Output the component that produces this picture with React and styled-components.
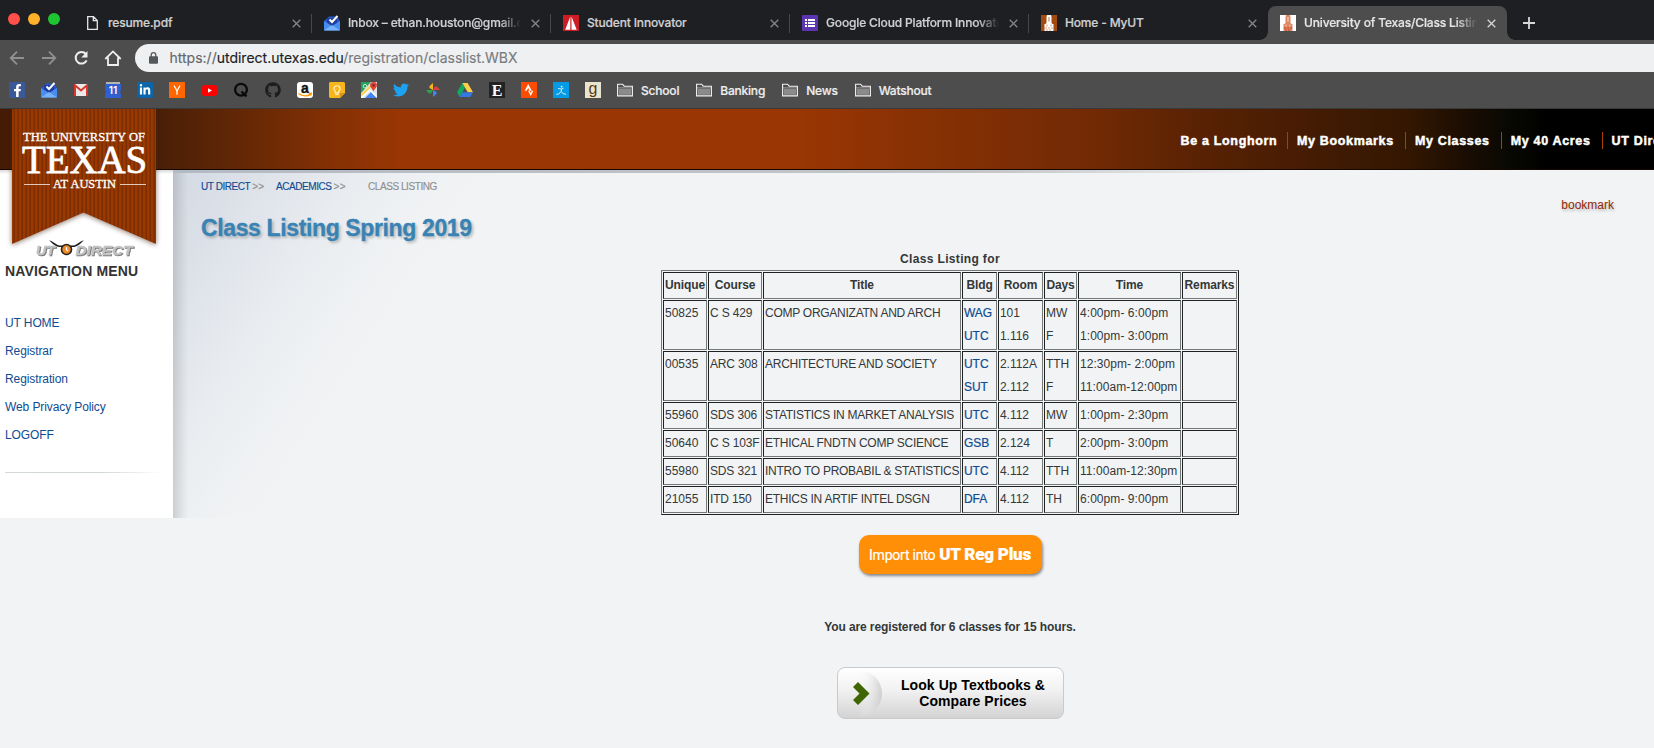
import React from 'react';
import styled, { createGlobalStyle } from 'styled-components';
import { FaFacebookF, FaLinkedinIn, FaGithub, FaTwitter, FaStrava } from 'react-icons/fa';

const UI = 'Inter, Roboto, sans-serif';
const PAGE = '"Liberation Sans", Arial, sans-serif';

const GlobalStyle = createGlobalStyle`
  * { box-sizing: border-box; }
  body { margin: 0; overflow: hidden; background: #f2f3f5; font-family: ${PAGE}; }
  a { text-decoration: none; }
  svg { display: block; flex: none; }
`;

const Screen = styled.div`
  width: 100vw;
  height: 100vh;
  overflow: hidden;
`;

/* Browser frame */

const TabStrip = styled.div`
  display: flex;
  height: 40px;
  padding-left: 8px;
  background: #1e1f23;
  font-family: ${UI};
`;

const WindowButtons = styled.div`
  display: flex;
  flex: none;
  gap: 8px;
  width: 65px;
  padding-top: 13px;
`;

const Light = styled.span`
  width: 12px;
  height: 12px;
  border-radius: 50%;
  background: ${(p) => p.$color};
`;

const TabBox = styled.div`
  position: relative;
  display: flex;
  flex: none;
  align-items: center;
  width: 239px;
  height: 34px;
  margin-top: 6px;
  padding: 0 11px 0 ${(p) => (p.$indent || 12)}px;
  border-radius: 8px 8px 0 0;
  background: ${(p) => (p.$active ? '#4d4d4d' : 'transparent')};
  &::after {
    content: '';
    position: absolute;
    right: 0;
    top: 8px;
    width: 1px;
    height: 19px;
    background: ${(p) => (p.$line ? '#47484c' : 'transparent')};
  }
`;

const Flare = styled.span`
  position: absolute;
  bottom: 0;
  ${(p) => p.$side}: -8px;
  width: 8px;
  height: 8px;
  background: radial-gradient(circle at ${(p) => (p.$side === 'left' ? '0 0' : '100% 0')}, transparent 7.5px, #4d4d4d 8px);
`;

const TabTitle = styled.span`
  flex: 1;
  min-width: 0;
  margin: 0 8px 0 ${(p) => p.$gap || 8}px;
  overflow: hidden;
  white-space: nowrap;
  font-size: 12px;
  font-weight: 500;
  line-height: 18px;
  letter-spacing: -0.16px;
  color: ${(p) => (p.$active ? '#e4e5e6' : '#cfd0d2')};
  -webkit-text-stroke: 0.2px;
  ${(p) => p.$fade && 'mask-image: linear-gradient(90deg, #000 87%, transparent 99%);'}
`;

const NewTab = styled.span`
  padding: 17px 0 0 16px;
`;

const Toolbar = styled.div`
  display: flex;
  align-items: center;
  height: 36px;
  background: #4d4d4d;
  padding-left: 8px;
  font-family: ${UI};
`;

const ToolButton = styled.span`
  width: 32px;
  flex: none;
`;

const AddressBar = styled.div`
  display: flex;
  align-items: center;
  flex: 1;
  height: 28px;
  margin: 0 -20px 0 -1px;
  padding-left: 14px;
  border-radius: 14px;
  background: #eff0f2;
  color: #797c80;
  font-size: 14px;
  white-space: nowrap;
`;

const Url = styled.span`
  margin-left: 11.5px;
  line-height: 18px;
  -webkit-text-stroke: 0.15px;
`;
const Scheme = styled.span`color: #64676b;`;
const Host = styled.span`color: #202124;`;

const BookmarkBar = styled.div`
  display: flex;
  align-items: center;
  height: 33px;
  padding: 0 0 4px 9px;
  background: #4d4d4d;
  border-bottom: 1px solid #383a3a;
  font-family: ${UI};
`;

const Favicon = styled.span`
  display: flex;
  flex: none;
  align-items: center;
  justify-content: center;
  width: 16px;
  height: 16px;
  margin-right: 16px;
  border-radius: ${(p) => p.$radius || 0}px;
  background: ${(p) => p.$bg || 'transparent'};
  color: ${(p) => p.$color || '#fff'};
`;

const Folder = styled.span`
  display: flex;
  align-items: center;
  gap: 8px;
  margin-right: 17px;
  font-size: 12px;
  font-weight: 500;
  letter-spacing: -0.2px;
  color: #eeeeee;
  -webkit-text-stroke: 0.2px;
`;

/* Site header */

const Masthead = styled.header`
  position: relative;
  height: 61px;
  background: linear-gradient(90deg, #451b06 0, #4a1f07 160px, #632705 240px, #843004 330px, #993603 400px,
    #993603 800px, #8c3204 890px, #722a05 1094px, #5a2203 1195px, #431b03 1320px, #331701 1410px, #1d0e02 1460px, #080802 1510px, #000 1546px);
  border-bottom: 1px solid #160800;
`;

const TopNav = styled.nav`
  display: flex;
  width: 1900px;
  padding: 23px 0 0 1170.5px;
`;

const TopLink = styled.a`
  height: 17px;
  padding: 0 ${(p) => (p.$first ? 9.5 : 11)}px 0 ${(p) => (p.$first ? 10 : 9)}px;
  border-left: ${(p) => (p.$first ? '0' : '1px solid #a63f0a')};
  color: #fff;
  font-size: 12.5px;
  font-weight: bold;
  line-height: 18px;
  letter-spacing: 0.67px;
  -webkit-text-stroke: 0.45px #fff;
  white-space: nowrap;
`;

const Ribbon = styled.div`
  position: absolute;
  z-index: 2;
  left: 0;
  top: 0;
`;

/* Page body */

const Body = styled.div`
  display: flex;
  width: 1699px;
`;

const Sidebar = styled.aside`
  flex: none;
  width: 173px;
  height: 348px;
  padding: 91px 0 0 5px;
  background: linear-gradient(#d9d9d9, #fff 4px);
`;

const MenuTitle = styled.h2`
  margin: 0 0 29px;
  font-size: 14px;
  line-height: 20px;
  letter-spacing: 0.16px;
  color: #333;
`;

const MenuLink = styled.a`
  display: block;
  height: 28px;
  font-size: 12px;
  line-height: 26px;
  letter-spacing: -0.1px;
  color: #0f4b91;
`;

const MenuRule = styled.div`
  width: 158px;
  height: 1px;
  margin-top: 22px;
  background: linear-gradient(90deg, #d3d9d9, #cfd5d5 60%, #fff);
`;

const Main = styled.main`
  position: relative;
  flex: 1;
  height: 578px;
  padding-left: 28px;
  background: linear-gradient(123deg, #d3dae3 0, #dbe0e8 60px, #e4e8ed 120px, #ebeef1 175px, #f0f2f4 235px, #f2f3f5 290px) 0 0 / 100% 348px no-repeat;
`;

const TopShade = styled.div`
  position: absolute;
  left: 0;
  top: 0;
  width: 1100px;
  height: 3px;
  background: linear-gradient(90deg, #b4bac3, #c4c6c8 75%, transparent);
`;

const SideShade = styled.div`
  position: absolute;
  left: 0;
  top: 3px;
  width: 15px;
  height: 345px;
  background: linear-gradient(90deg, rgba(90, 95, 90, 0.22), rgba(90, 95, 90, 0.1) 50%, transparent);
`;

const Trail = styled.div`
  display: flex;
  height: 24px;
  padding-top: 10px;
  font-size: 10px;
  line-height: 14px;
  letter-spacing: -0.43px;
  color: #8f8f8f;
  -webkit-text-stroke: 0.15px;
`;

const Crumb = styled.span`
  width: ${(p) => p.$w}px;
  white-space: nowrap;
  a { color: #0f4b91; margin-right: 2px; }
`;

const Arrows = styled.span`letter-spacing: 0.2px;`;

const BookmarkLink = styled.a`
  display: block;
  margin: 3px 85px 0 0;
  text-align: right;
  font-size: 12px;
  line-height: 16px;
  color: #8f2a06;
  text-shadow: 1px 2px 3px rgba(0, 0, 0, 0.25);
`;

const PageTitle = styled.h1`
  margin: 0;
  height: 36px;
  padding-top: 2px;
  font-size: 23px;
  line-height: 26px;
  letter-spacing: -0.37px;
  color: #3883b4;
  -webkit-text-stroke: 0.3px #3883b4;
  text-shadow: 2px 2px 3px rgba(0, 0, 0, 0.25);
`;

const Center = styled.div`
  display: flex;
  flex-direction: column;
  align-items: center;
`;

const Caption = styled.div`
  height: 21px;
  font-size: 12px;
  font-weight: bold;
  line-height: 21px;
  letter-spacing: 0.34px;
  color: #333838;
`;

const Table = styled.table`
  table-layout: fixed;
  width: 578px;
  border: 1px solid;
  border-color: #747876 #1f2222 #1f2222 #747876;
  border-collapse: separate;
  border-spacing: 1px;
  font-size: 12px;
  line-height: 23px;
  color: #333838;
`;

const cell = `
  border: 1px solid;
  border-color: #1f2222 #747876 #747876 #1f2222;
  padding: 1px;
  white-space: nowrap;
`;

const Th = styled.th`
  ${cell}
  letter-spacing: -0.12px;
`;

const Td = styled.td`
  ${cell}
  vertical-align: top;
  text-align: left;
  letter-spacing: ${(p) => p.$track || 0}px;
`;

const Line = styled.div`
  color: ${(p) => (p.$link ? '#0f4b91' : 'inherit')};
  -webkit-text-stroke: ${(p) => (p.$link ? '0.2px #0f4b91' : '0')};
`;

const ImportButton = styled.button`
  display: flex;
  align-items: baseline;
  justify-content: center;
  gap: 4px;
  width: 183px;
  height: 39px;
  margin-top: 20px;
  padding: 0;
  border: 0;
  border-radius: 10px;
  background: #ff8f07;
  box-shadow: 1px 2px 3px rgba(0, 0, 0, 0.45);
  color: #fff;
  font: 400 14px/38px Roboto, sans-serif;
  letter-spacing: -0.22px;
  -webkit-text-stroke: 0.2px;
  white-space: nowrap;
`;

const Strong = styled.strong`
  font-size: 17px;
  font-weight: 900;
`;

const Summary = styled.p`
  margin: 44px 0 0;
  font-size: 12px;
  font-weight: bold;
  line-height: 19px;
  height: 20px;
  letter-spacing: -0.11px;
  color: #333838;
`;

const BooksButton = styled.button`
  display: flex;
  width: 227px;
  height: 52px;
  margin-top: 29px;
  padding: 0;
  overflow: hidden;
  border: 1px solid #c9cacb;
  border-radius: 8px;
  background: linear-gradient(#fff, #f1f1f1 45%, #d3d3d3);
  color: #000;
  font: bold 14px/16px ${PAGE};
`;

const BooksText = styled.span`
  flex: 1;
  padding-top: 9px;
  text-align: center;
  letter-spacing: 0.06px;
`;

/* Icons */

const Close = ({ bright }) => (
  <svg width="9" height="9" viewBox="0 0 9 9" stroke={bright ? '#d5d5d5' : '#85868a'} strokeWidth="1.3">
    <path d="M.7.7l7.6 7.6M8.3.7L.7 8.3" />
  </svg>
);

const Doc = () => (
  <svg width="11" height="14" viewBox="0 0 11 14" fill="none" stroke="#e6e6e6" strokeWidth="1.3">
    <path d="M.7.7h5.8l3.8 3.8v8.8H.7zM6.3.7v4h4" />
  </svg>
);

const InboxIcon = () => (
  <svg width="16" height="16" viewBox="0 0 16 16">
    <path d="M0 6l5-4.5h8L16 6v4H0z" fill="#2a56c6" />
    <path d="M3 3h10v7H3z" fill="#1f3f9e" />
    <path d="M0 6l8 5 8-5v9.5H0z" fill="#4a8df0" />
    <path d="M0 15.5L8 10l8 5.5z" fill="#76b1fb" />
    <path d="M5.5 4.5L8 7l5.5-6" stroke="#fff" strokeWidth="2" fill="none" />
  </svg>
);

const Sail = () => (
  <svg width="16" height="16" viewBox="0 0 16 16">
    <path d="M0 0h16v16H0z" fill="#cc1c24" />
    <path d="M7.3 1.5v13.3H2.2zM8.5 1.5l5.2 13.3H8.5z" fill="#fff" />
  </svg>
);

const Forms = () => (
  <svg width="16" height="16" viewBox="0 0 16 16">
    <rect width="16" height="16" rx="1" fill="#5e35b1" />
    <path d="M3 4h2v2H3zM6 4h7v2H6zM3 7h2v2H3zM6 7h7v2H6zM3 10h2v2H3zM6 10h7v2H6z" fill="#fff" />
  </svg>
);

const Tower = ({ bg, fg, base }) => (
  <svg width="16" height="16" viewBox="0 0 16 16">
    <path d="M0 0h16v16H0z" fill={bg} />
    <path d="M6 0h4l.5 2v6l1 1h1v7h-9V9h1l1-1V2z" fill={fg} />
    <path d="M7.300 2h1.400v4.500H7.300zM5.500 9.500h1v2h-1zM9.500 9.500h1v2h-1z" fill={bg} opacity=".55" />
    <path d="M4 13h8M5 15h6" stroke={base} strokeWidth="1.2" strokeDasharray="2 1" />
  </svg>
);

const Plus = () => (
  <svg width="12" height="12" viewBox="0 0 12 12" stroke="#d8d8d8" strokeWidth="1.8">
    <path d="M6 0v12M0 6h12" />
  </svg>
);

const Arrow = ({ flip }) => (
  <svg width="18" height="16" viewBox="0 0 18 16" fill="none" stroke="#909090" strokeWidth="1.8">
    <path d={flip ? 'M2 8h13M9 1.7L15.3 8 9 14.3' : 'M16 8H3M9 1.7L2.7 8 9 14.3'} />
  </svg>
);

const Reload = () => (
  <svg width="18" height="16" viewBox="-1.5 0 18 16" fill="none">
    <path d="M13.2 10.4A5.8 5.8 0 1 1 12.4 4" stroke="#f0f0f0" strokeWidth="2" />
    <path d="M14 1v6.5H7.8z" fill="#f0f0f0" />
  </svg>
);

const Home = () => (
  <svg width="18" height="16" viewBox="0 0 18 16" fill="none" stroke="#f0f0f0" strokeWidth="1.8">
    <path d="M1.3 9L9 1.4 16.7 9M4 7.5V15h10V7.5" />
  </svg>
);

const Lock = () => (
  <svg width="9" height="12" viewBox="0 0 9 12">
    <path d="M2.2 5V3a2.3 2.3 0 0 1 4.6 0v2" fill="none" stroke="#54575b" strokeWidth="1.3" />
    <rect y="4.3" width="9" height="7.4" rx="1" fill="#54575b" />
  </svg>
);

const FolderIcon = () => (
  <svg width="16" height="14" viewBox="0 0 16 14">
    <path d="M.6 12.9V1.2h5l1.6 2h8.2v9.7z" fill="#4d4d4d" stroke="#f3f3f3" strokeWidth="1.1" />
    <path d="M1.8 6h12.4v5.8H1.8z" fill="#8b8b8b" />
    <path d="M1 4.900h14" stroke="#d9d9d9" strokeWidth=".6" />
  </svg>
);

const Gmail = () => (
  <svg width="14" height="12" viewBox="0 0 14 12">
    <rect width="14" height="12" rx="1" fill="#eceae8" />
    <path d="M1 12V1.3l6 5.2 6-5.2V12" fill="none" stroke="#d8362c" strokeWidth="2" />
  </svg>
);

const Calendar = () => (
  <svg width="16" height="16" viewBox="0 0 16 16">
    <path d="M1 0h14v3H1z" fill="#b5b5b5" />
    <path d="M0 2h16v6l-1 2 1 2v4H0v-4l1-2-1-2z" fill="#3060cf" />
    <text x="8" y="12.300" textAnchor="middle" fill="#fff" fontFamily={UI} fontSize="10" fontWeight="600">11</text>
  </svg>
);

const YIcon = () => (
  <svg width="16" height="16" viewBox="0 0 16 16" fill="none" stroke="#fff" strokeWidth="1.3">
    <path d="M5 3.5L8 9l3-5.5M8 8.7v4" />
  </svg>
);

const Youtube = () => (
  <svg width="15" height="11" viewBox="0 0 15 11">
    <rect width="15" height="11" rx="2.8" fill="#f00" />
    <path d="M6 3.2l4 2.3-4 2.3z" fill="#fff" />
  </svg>
);

const QIcon = () => (
  <svg width="16" height="16" viewBox="0 0 16 16" fill="none" stroke="#0a0a0a">
    <circle cx="8" cy="7.700" r="5.900" strokeWidth="2.300" />
    <path d="M8.500 9.500L13.600 14.400" strokeWidth="2.300" />
  </svg>
);

const AmazonArt = () => (
  <svg width="16" height="16" viewBox="0 0 16 16">
    <text x="8" y="10.500" textAnchor="middle" fontFamily={PAGE} fontSize="14" fontWeight="bold" fill="#111" stroke="#111" strokeWidth=".4">a</text>
    <path d="M1.500 11.500c4 3 9 3 12.300.6M12 11.500l2.300-.2-.6 2.300" fill="none" stroke="#f90" strokeWidth="1.400" />
  </svg>
);

const Keep = () => (
  <svg width="16" height="16" viewBox="0 0 16 16">
    <path d="M1 0h14l1 1v10l-5 5H1l-1-1V1z" fill="#f5b51b" />
    <path d="M16 11l-5 5v-5z" fill="#d9951a" />
    <path d="M6.300 9.300C4 7.800 4.600 3.700 8 3.700s4 4.100 1.700 5.600v1.400H6.300zM6.300 12.400h3.400" fill="none" stroke="#fff3cf" strokeWidth="1.1" />
  </svg>
);

const Maps = () => (
  <svg width="16" height="16" viewBox="0 0 16 16">
    <path d="M0 0h16v16H0z" fill="#dfe3e6" />
    <path d="M0 0h10L0 11z" fill="#25a25a" />
    <path d="M4 16l6-6 6 6z" fill="#4285f4" />
    <path d="M0 13.500L11 3" stroke="#fdd34c" strokeWidth="2.200" />
    <path d="M0 16L9 8M9 8l7 7" stroke="#fff" strokeWidth="1.500" />
    <path d="M12.500 0a3.400 3.400 0 0 1 3.400 3.500c0 2.200-2.400 3-3.400 6.200-1-3.200-3.400-4-3.400-6.200A3.400 3.400 0 0 1 12.500 0z" fill="#dc4437" />
    <circle cx="12.500" cy="3.400" r="1.200" fill="#7b231e" />
    <circle cx="4" cy="4.200" r="1.800" fill="none" stroke="#c8efd6" strokeWidth="1" />
  </svg>
);

const Photos = () => (
  <svg width="14" height="14" viewBox="0 0 14 14">
    <path d="M7 0v7L3.500 5V3z" fill="#f4b61b" />
    <path d="M14 7H7l2-3.500h2z" fill="#dc4437" />
    <path d="M7 14V7l3.500 2v2z" fill="#4285f4" />
    <path d="M0 7h7l-2 3.500H3z" fill="#2ba24c" />
  </svg>
);

const Drive = () => (
  <svg width="16" height="14" viewBox="0 0 16 14">
    <path d="M5.400 0L8 4.600 2.700 14 0 9.300z" fill="#11a861" />
    <path d="M5.400 0h5.200L16 9.300h-5.300z" fill="#ffcf48" />
    <path d="M5.400 9.300H16L13.300 14H2.700z" fill="#3777e3" />
  </svg>
);

const Initial = ({ children, serif, ...rest }) => (
  <svg width="16" height="16" viewBox="0 0 16 16">
    <text x="8" textAnchor="middle" fontFamily={serif ? '"Liberation Serif", serif' : PAGE} {...rest}>{children}</text>
  </svg>
);

const Runner = () => (
  <svg width="16" height="16" viewBox="0 0 16 16" fill="none" stroke="#e8f7ff" strokeWidth=".9">
    <circle cx="8.700" cy="4.700" r=".5" fill="#fff" />
    <path d="M5 6.500l3.500.5 2-.8M8.300 7v2.500l1.700 2M8.300 9.500L6 11.500M3.300 12.500l3-.8M9.700 11.500l3.300.8" />
  </svg>
);

const RibbonArt = () => (
  <svg width="180" height="155" viewBox="0 0 180 155">
    <defs>
      <pattern id="stripe" width="4" height="10" patternUnits="userSpaceOnUse">
        <path d="M0 0h4v10H0z" fill="#9a3703" />
        <path d="M1.500 0h1.300v10H1.500z" fill="#742a05" />
      </pattern>
      <filter id="soft" x="-20%" y="-20%" width="140%" height="140%">
        <feDropShadow dx="0" dy="1" stdDeviation="2.500" floodColor="#3a1a08" floodOpacity=".6" />
      </filter>
      <filter id="emboss" x="-10%" y="-30%" width="120%" height="160%">
        <feDropShadow dx="1" dy="1" stdDeviation=".3" floodColor="#777" floodOpacity="1" />
      </filter>
    </defs>
    <path d="M12 0h144v135L83.500 103.500 12 135z" fill="url(#stripe)" filter="url(#soft)" />
    <g fill="#fff" fontFamily='"Liberation Serif", serif' stroke="#fff">
      <text x="23" y="32" fontSize="12" strokeWidth=".3" textLength="122" lengthAdjust="spacingAndGlyphs">THE UNIVERSITY OF</text>
      <text x="22" y="64" fontSize="40" strokeWidth=".8" textLength="125" lengthAdjust="spacingAndGlyphs">TEXAS</text>
      <text x="53" y="79" fontSize="12" strokeWidth=".3" textLength="63" lengthAdjust="spacingAndGlyphs">AT AUSTIN</text>
    </g>
    <path d="M24 75.500h26M120 75.500h26" stroke="#e3c9b8" />
    <g fontFamily={PAGE} fontWeight="bold" fontStyle="italic" fontSize="13" fill="#c2c2c2" stroke="#c2c2c2" strokeWidth=".4" filter="url(#emboss)">
      <text x="36" y="146" textLength="19" lengthAdjust="spacingAndGlyphs">UT</text>
      <text x="75.500" y="146" textLength="57" lengthAdjust="spacingAndGlyphs">DIRECT</text>
    </g>
    <path d="M49 131.500c5 .5 6 4.500 11 5h13c5-.5 6-4.500 11-5-3 2-5 5.500-10 6.500H59c-5-1-7-4.500-10-6.500z" fill="#1c1c1c" />
    <circle cx="66.500" cy="140.500" r="5.800" fill="#26211d" />
    <circle cx="66.500" cy="140.500" r="4.200" fill="#f08a24" />
    <path d="M66.500 138v3l1.600 1" stroke="#fff" strokeWidth="1.200" fill="none" />
  </svg>
);

const BooksArt = () => (
  <svg width="46" height="50" viewBox="0 0 46 50">
    <defs>
      <linearGradient id="disc" x1="0" x2="1">
        <stop offset=".5" stopColor="#fff" stopOpacity="0" />
        <stop offset="1" stopColor="#c4c4c4" stopOpacity=".75" />
      </linearGradient>
    </defs>
    <circle cx="21" cy="25.500" r="23" fill="url(#disc)" />
    <path d="M15 19l5-5 11.500 11.500L20 37l-5-5 6.500-6.500z" fill="#3f6600" />
  </svg>
);

/* Data */

const tabs = [
  { title: 'resume.pdf', icon: <Doc />, indent: 14, gap: 10, line: true },
  { title: 'Inbox – ethan.houston@gmail.com', icon: <InboxIcon />, fade: true, line: true },
  { title: 'Student Innovator', icon: <Sail />, line: true },
  { title: 'Google Cloud Platform Innovators', icon: <Forms />, fade: true, line: true },
  { title: 'Home - MyUT', icon: <Tower bg="#a24a10" fg="#fff" base="#d9a27c" /> },
  { title: 'University of Texas/Class Listing', icon: <Tower bg="#fff" fg="#df8663" base="#b8401a" />, fade: true, active: true },
];

const favicons = [
  { bg: '#3b5998', art: <FaFacebookF size={13} /> },
  { art: <InboxIcon /> },
  { art: <Gmail /> },
  { art: <Calendar /> },
  { bg: '#0a66a8', art: <FaLinkedinIn size={12} />, radius: 1 },
  { bg: '#ff6600', art: <YIcon /> },
  { art: <Youtube /> },
  { art: <QIcon /> },
  { color: '#1b1d1f', art: <FaGithub size={16} /> },
  { bg: '#fff', radius: 3, art: <AmazonArt /> },
  { art: <Keep /> },
  { art: <Maps /> },
  { color: '#1da1f2', art: <FaTwitter size={16} /> },
  { art: <Photos /> },
  { art: <Drive /> },
  { bg: '#222', art: <Initial serif y="13.500" fontSize="16" fontWeight="bold" fill="#fff">E</Initial> },
  { bg: '#fc4c02', art: <FaStrava size={12} /> },
  { bg: '#039be5', art: <Runner /> },
  { bg: '#e9e5cd', art: <Initial y="12" fontSize="16" fill="#5a3a1a">g</Initial> },
];

const links = ['UT HOME', 'Registrar', 'Registration', 'Web Privacy Policy', 'LOGOFF'];
const topLinks = ['Be a Longhorn', 'My Bookmarks', 'My Classes', 'My 40 Acres', 'UT Direct'];

const columns = [
  ['Unique', 45], ['Course', 55], ['Title', 199], ['Bldg', 36],
  ['Room', 46], ['Days', 34], ['Time', 104], ['Remarks', 56],
];

const classes = [
  ['50825', 'C S 429', 'COMP ORGANIZATN AND ARCH', [['WAG', '101', 'MW', '4:00pm- 6:00pm'], ['UTC', '1.116', 'F', '1:00pm- 3:00pm']]],
  ['00535', 'ARC 308', 'ARCHITECTURE AND SOCIETY', [['UTC', '2.112A', 'TTH', '12:30pm- 2:00pm'], ['SUT', '2.112', 'F', '11:00am-12:00pm']]],
  ['55960', 'SDS 306', 'STATISTICS IN MARKET ANALYSIS', [['UTC', '4.112', 'MW', '1:00pm- 2:30pm']]],
  ['50640', 'C S 103F', 'ETHICAL FNDTN COMP SCIENCE', [['GSB', '2.124', 'T', '2:00pm- 3:00pm']]],
  ['55980', 'SDS 321', 'INTRO TO PROBABIL & STATISTICS', [['UTC', '4.112', 'TTH', '11:00am-12:30pm']]],
  ['21055', 'ITD 150', 'ETHICS IN ARTIF INTEL DSGN', [['DFA', '4.112', 'TH', '6:00pm- 9:00pm']]],
];

const ClassRow = ({ row: [unique, course, title, meetings] }) => (
  <tr>
    <Td>{unique}</Td>
    <Td $track={-0.15}>{course}</Td>
    <Td $track={-0.26}>{title}</Td>
    {[0, 1, 2, 3].map((i) => (
      <Td key={i} $track={i < 3 ? -0.05 : 0.06}>
        {meetings.map((m, k) => <Line key={k} $link={i === 0}>{m[i]}</Line>)}
      </Td>
    ))}
    <Td />
  </tr>
);

export default function App() {
  return (
    <Screen>
      <GlobalStyle />
      <TabStrip>
        <WindowButtons>
          <Light $color="#ff5049" />
          <Light $color="#ffb12a" />
          <Light $color="#1fc631" />
        </WindowButtons>
        {tabs.map((t) => (
          <TabBox key={t.title} $active={t.active} $line={t.line} $indent={t.indent}>
            {t.active && <Flare $side="left" />}
            {t.active && <Flare $side="right" />}
            {t.icon}
            <TabTitle $fade={t.fade} $active={t.active} $gap={t.gap}>{t.title}</TabTitle>
            <Close bright={t.active} />
          </TabBox>
        ))}
        <NewTab><Plus /></NewTab>
      </TabStrip>
      <Toolbar>
        <ToolButton><Arrow /></ToolButton>
        <ToolButton><Arrow flip /></ToolButton>
        <ToolButton><Reload /></ToolButton>
        <ToolButton><Home /></ToolButton>
        <AddressBar>
          <Lock />
          <Url><Scheme>https://</Scheme><Host>utdirect.utexas.edu</Host>/registration/classlist.WBX</Url>
        </AddressBar>
      </Toolbar>
      <BookmarkBar>
        {favicons.map((f, i) => (
          <Favicon key={i} $bg={f.bg} $color={f.color} $radius={f.radius}>{f.art}</Favicon>
        ))}
        {['School', 'Banking', 'News', 'Watshout'].map((name) => (
          <Folder key={name}><FolderIcon />{name}</Folder>
        ))}
      </BookmarkBar>

      <Masthead>
        <Ribbon><RibbonArt /></Ribbon>
        <TopNav>
          {topLinks.map((l, i) => <TopLink key={l} $first={i === 0}>{l}</TopLink>)}
        </TopNav>
      </Masthead>
      <Body>
        <Sidebar>
          <MenuTitle>NAVIGATION MENU</MenuTitle>
          {links.map((l) => <MenuLink key={l}>{l}</MenuLink>)}
          <MenuRule />
        </Sidebar>
        <Main>
          <TopShade />
          <SideShade />
          <Trail>
            <Crumb $w={75}><a>UT DIRECT</a><Arrows>&gt;&gt;</Arrows></Crumb>
            <Crumb $w={92}><a>ACADEMICS</a><Arrows>&gt;&gt;</Arrows></Crumb>
            <Crumb>CLASS LISTING</Crumb>
          </Trail>
          <BookmarkLink>bookmark</BookmarkLink>
          <PageTitle>Class Listing Spring 2019</PageTitle>
          <Center>
            <Caption>Class Listing for</Caption>
            <Table>
              <colgroup>{columns.map(([name, w]) => <col key={name} width={w - 1} />)}</colgroup>
              <thead><tr>{columns.map(([name]) => <Th key={name}>{name}</Th>)}</tr></thead>
              <tbody>{classes.map((row) => <ClassRow key={row[0]} row={row} />)}</tbody>
            </Table>
            <ImportButton>Import into <Strong>UT Reg Plus</Strong></ImportButton>
            <Summary>You are registered for 6 classes for 15 hours.</Summary>
            <BooksButton>
              <BooksArt />
              <BooksText>Look Up Textbooks &amp;<br />Compare Prices</BooksText>
            </BooksButton>
          </Center>
        </Main>
      </Body>
    </Screen>
  );
}
